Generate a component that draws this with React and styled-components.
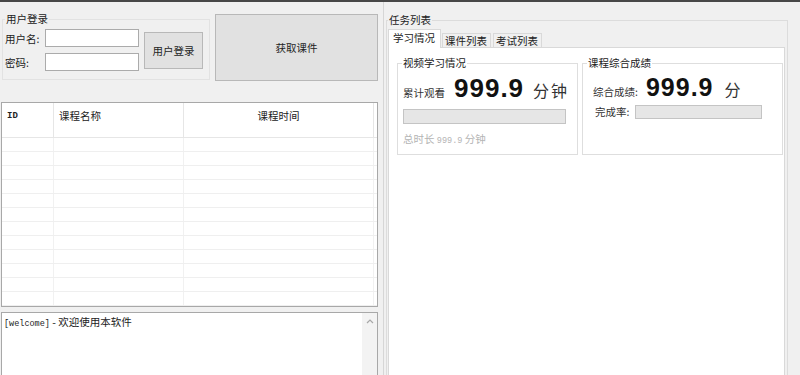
import React from 'react';
import styled, { createGlobalStyle } from 'styled-components';

const CJK = `"Noto Sans CJK SC", "Noto Sans", sans-serif`;
const MONO = `"Liberation Mono", "DejaVu Sans Mono", monospace`;
const NUM = `"Liberation Sans", Arial, sans-serif`;

const GlobalStyle = createGlobalStyle`
  html, body {
    margin: 0;
    padding: 0;
    background: #f0f0f0;
  }
  body {
    font-family: ${CJK};
    font-size: 10.5px;
    color: #1e1e1e;
  }
  * {
    box-sizing: border-box;
  }
`;

const Window = styled.div`
  width: 800px;
  height: 375px;
  overflow: hidden;
  display: flex;
  background: #f0f0f0;
  border-top: 2px solid #474747;
`;

const LeftPane = styled.div`
  width: 379px;
  flex-shrink: 0;
  display: flex;
  flex-direction: column;
`;

const TopRow = styled.div`
  height: 100px;
  display: flex;
  align-items: flex-start;
  gap: 5px;
  padding: 10px 0 0 2px;
`;

const GroupBox = styled.fieldset`
  margin: 0;
  min-width: 0;
  border: 1px solid ${(p) => p.$border || '#dcdcdc'};
`;

const Caption = styled.legend`
  padding: 0 1px;
  margin-left: ${(p) => p.$offset || 0}px;
  font-size: 10.5px;
  line-height: 14px;
  color: #222;
`;

const LoginBox = styled(GroupBox)`
  width: 208px;
  height: 68px;
  display: flex;
  align-items: flex-start;
  gap: 5px;
  padding: 3px 0 0 2px;
  border-color: #e2e2e2;
`;

const Fields = styled.div`
  display: grid;
  grid-template-columns: 40px 94px;
  row-gap: 6px;
  align-items: center;
`;

const FieldLabel = styled.label`
  font-size: 10.5px;
  color: #222;
`;

const TextInput = styled.input`
  width: 94px;
  height: 18px;
  margin: 0;
  border: 1px solid #ababab;
  background: #fff;
`;

const Button = styled.button`
  margin: ${(p) => p.$mt || 0}px 0 0;
  width: ${(p) => p.$w}px;
  height: ${(p) => p.$h}px;
  padding: 0;
  font-family: ${CJK};
  font-size: 10.5px;
  color: #1e1e1e;
  background: #e1e1e1;
  border: 1px solid #b8b8b8;
`;

const GridTable = styled.div`
  margin-left: 1px;
  width: 377px;
  height: 205px;
  border: 1px solid #a8a8a8;
  background: #fff;
  overflow: hidden;
`;

const GridRow = styled.div`
  display: grid;
  grid-template-columns: 52px 130px 190px 1fr;
  height: ${(p) => p.$h}px;
  border-bottom: 1px solid ${(p) => (p.$head ? '#e6e6e6' : '#efefef')};
`;

const Cell = styled.div`
  border-right: 1px solid ${(p) => (p.$head ? '#e6e6e6' : '#f1f1f1')};
  padding: 6px 0 0 ${(p) => (p.$center ? 0 : 5)}px;
  text-align: ${(p) => (p.$center ? 'center' : 'left')};
  font-family: ${(p) => (p.$mono ? MONO : CJK)};
  font-size: ${(p) => (p.$mono ? '9px' : '10.5px')};
  font-weight: ${(p) => (p.$mono ? 700 : 400)};
  line-height: 14px;
  color: #222;
  &:last-child {
    border-right: none;
  }
`;

const LogBox = styled.div`
  margin: 5px 0 0 1px;
  width: 377px;
  flex: 1;
  display: flex;
  border: 1px solid #a8a8a8;
  border-bottom: none;
  background: #fff;
`;

const LogText = styled.div`
  flex: 1;
  padding: 2px 2px;
  font-size: 10.5px;
  line-height: 14px;
  color: #222;
`;

const LogTag = styled.span`
  font-family: ${MONO};
  font-size: 8.5px;
`;

const ScrollTrack = styled.div`
  width: 15px;
  background: #f3f3f3;
  display: flex;
  justify-content: center;
  padding-top: 6px;
`;

const Splitter = styled.div`
  width: 5px;
  flex-shrink: 0;
  border-right: 1px solid #d6d6d6;
`;

const RightPane = styled.div`
  flex: 1;
  padding-top: 11px;
`;

const TaskBox = styled(GroupBox)`
  margin-left: 2px;
  width: 402px;
  height: 400px;
  padding: 0 2px 0 1px;
  display: flex;
  flex-direction: column;
`;

const TabBar = styled.div`
  margin-top: 2px;
  height: 19px;
  display: flex;
  align-items: flex-end;
  position: relative;
  z-index: 1;
`;

const Tab = styled.div`
  height: ${(p) => (p.$active ? 19 : 15)}px;
  padding: ${(p) => (p.$active ? '2px 5px 0 4px' : '1px 3px 0 2px')};
  margin-right: ${(p) => (p.$active ? 1 : 2)}px;
  background: ${(p) => (p.$active ? '#fff' : '#f0f0f0')};
  border: 1px solid #d9d9d9;
  border-bottom: ${(p) => (p.$active ? 'none' : '1px solid #d9d9d9')};
  font-size: 10.5px;
  line-height: 12px;
  color: #222;
`;

const TabPanel = styled.div`
  margin-top: -1px;
  flex: 1;
  display: flex;
  align-items: flex-start;
  gap: 4px;
  padding: 8px 0 0 8px;
  background: #fff;
  border: 1px solid #d9d9d9;
`;

const StatBox = styled(GroupBox)`
  width: ${(p) => p.$w}px;
  height: 99px;
  padding: 0;
  border-color: #dedede;
`;

const StatRow = styled.div`
  display: flex;
  align-items: baseline;
  gap: ${(p) => p.$gap}px;
  margin-top: 5px;
  padding-left: ${(p) => p.$pl}px;
`;

const StatLabel = styled.span`
  font-size: 10.5px;
  color: #333;
`;

const BigNumber = styled.span`
  font-family: ${NUM};
  font-weight: 700;
  font-size: ${(p) => p.$size}px;
  line-height: ${(p) => p.$size}px;
  letter-spacing: 1px;
  color: #111;
`;

const Unit = styled.span`
  margin-left: ${(p) => p.$ml}px;
  font-size: 16px;
  letter-spacing: 2px;
  color: #333;
`;

const Bar = styled.div`
  width: ${(p) => p.$w}px;
  height: ${(p) => p.$h}px;
  background: #e6e6e6;
  border: 1px solid #c4c4c4;
`;

const BarWrap = styled.div`
  margin: ${(p) => p.$mt}px 0 0 5px;
`;

const Muted = styled.div`
  margin: 8px 0 0 5px;
  font-size: 10.5px;
  line-height: 14px;
  color: #b4b4b4;
`;

const MutedNum = styled.span`
  font-family: ${MONO};
  font-size: 8.5px;
`;

const RateRow = styled.div`
  display: flex;
  align-items: center;
  gap: 6px;
  margin-top: 3px;
  padding-left: 12px;
`;

const ROWS = Array.from({ length: 12 });

const App = () => (
  <>
    <GlobalStyle />
    <Window>
      <LeftPane>
        <TopRow>
          <LoginBox>
            <Caption>用户登录</Caption>
            <Fields>
              <FieldLabel>用户名:</FieldLabel>
              <TextInput />
              <FieldLabel>密码:</FieldLabel>
              <TextInput type="password" />
            </Fields>
            <Button $w={59} $h={37} $mt={3}>用户登录</Button>
          </LoginBox>
          <Button $w={163} $h={67} $mt={2}>获取课件</Button>
        </TopRow>

        <GridTable>
          <GridRow $h={35} $head>
            <Cell $head $mono>ID</Cell>
            <Cell $head>课程名称</Cell>
            <Cell $head $center>课程时间</Cell>
            <Cell $head />
          </GridRow>
          {ROWS.map((_, i) => (
            <GridRow key={i} $h={14}>
              <Cell />
              <Cell />
              <Cell />
              <Cell />
            </GridRow>
          ))}
        </GridTable>

        <LogBox>
          <LogText>
            <LogTag>[welcome]</LogTag> - 欢迎使用本软件
          </LogText>
          <ScrollTrack>
            <svg width="8" height="5" viewBox="0 0 8 5">
              <polyline points="1,4 4,1 7,4" fill="none" stroke="#a8a8a8" strokeWidth="1.2" />
            </svg>
          </ScrollTrack>
        </LogBox>
      </LeftPane>

      <Splitter />

      <RightPane>
        <TaskBox>
          <Caption>任务列表</Caption>
          <TabBar>
            <Tab $active>学习情况</Tab>
            <Tab>课件列表</Tab>
            <Tab>考试列表</Tab>
          </TabBar>
          <TabPanel>
            <StatBox $w={181}>
              <Caption $offset={4}>视频学习情况</Caption>
              <StatRow $gap={9} $pl={5}>
                <StatLabel>累计观看</StatLabel>
                <BigNumber $size={26}>999.9</BigNumber>
                <Unit $ml={0}>分钟</Unit>
              </StatRow>
              <BarWrap $mt={7}>
                <Bar $w={163} $h={15} />
              </BarWrap>
              <Muted>
                总时长 <MutedNum>999.9</MutedNum> 分钟
              </Muted>
            </StatBox>
            <StatBox $w={201}>
              <Caption $offset={4}>课程综合成绩</Caption>
              <StatRow $gap={8} $pl={10}>
                <StatLabel>综合成绩:</StatLabel>
                <BigNumber $size={25}>999.9</BigNumber>
                <Unit $ml={3}>分</Unit>
              </StatRow>
              <RateRow>
                <StatLabel>完成率:</StatLabel>
                <Bar $w={127} $h={14} />
              </RateRow>
            </StatBox>
          </TabPanel>
        </TaskBox>
      </RightPane>
    </Window>
  </>
);

export default App;
